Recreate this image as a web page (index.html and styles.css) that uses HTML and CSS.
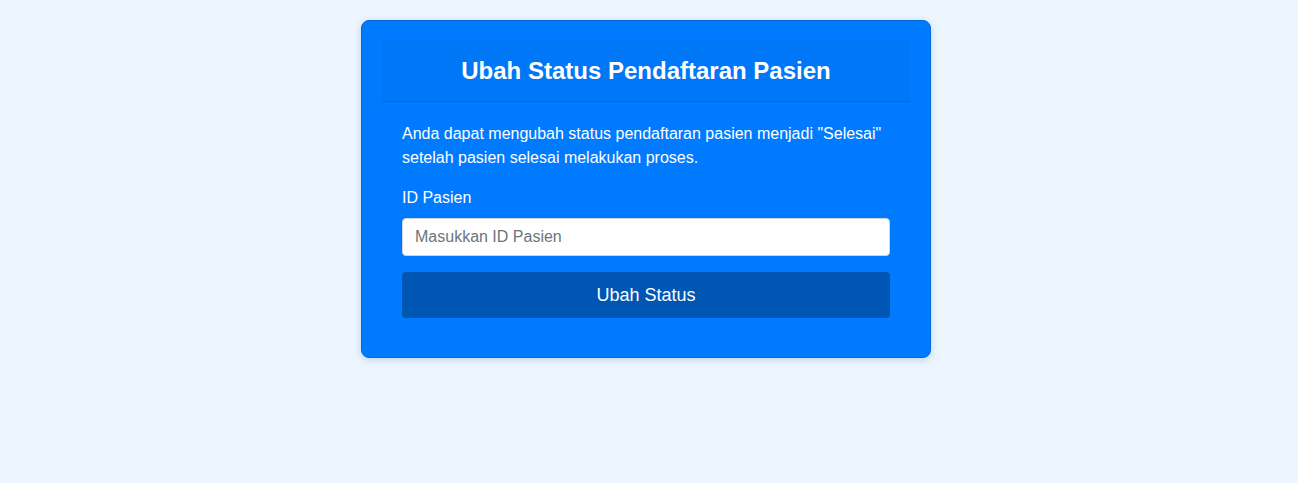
FILE: index.html
```html
<!DOCTYPE html>
<html lang="id">
<head>
<meta charset="utf-8">
<title>Ubah Status Pendaftaran Pasien</title>
<link rel="stylesheet" href="styles.css">
</head>
<body>
<div class="page">
  <div class="card">
    <div class="card-header">
      <h1 class="title">Ubah Status Pendaftaran Pasien</h1>
    </div>
    <div class="card-body">
      <p class="desc">Anda dapat mengubah status pendaftaran pasien menjadi "Selesai" setelah pasien selesai melakukan proses.</p>
      <form class="form">
        <label class="label" for="id">ID Pasien</label>
        <input class="input" id="id" type="text" placeholder="Masukkan ID Pasien">
        <button class="btn" type="button">Ubah Status</button>
      </form>
    </div>
  </div>
</div>
</body>
</html>
```

FILE: styles.css
```css
* { box-sizing: border-box; }
html, body {
  margin: 0;
  padding: 0;
  background: #edf6fe;
  font-family: "Liberation Sans", Arial, sans-serif;
}
.page {
  display: flex;
  justify-content: center;
  padding: 20px 6px 20px 0;
}
.card {
  width: 570px;
  background: #007bff;
  border: 1px solid #0069d9;
  border-radius: 8px;
  padding: 20px 20px 19px;
  box-shadow: 0 2px 8px rgba(0, 60, 120, 0.18);
  color: #fff;
}
.card-header {
  background: rgba(0, 0, 0, 0.03);
  border-bottom: 1px solid rgba(0, 0, 0, 0.1);
  padding: 12px 20px;
  text-align: center;
}
.title {
  margin: 0;
  font-size: 24px;
  line-height: 36px;
  font-weight: bold;
}
.card-body {
  padding: 20px;
}
.desc {
  margin: 0 0 16px;
  font-size: 16px;
  line-height: 24px;
}
.form {
  display: flex;
  flex-direction: column;
}
.label {
  font-size: 16px;
  line-height: 24px;
  margin-bottom: 8px;
}
.input {
  height: 38px;
  padding: 6px 12px;
  font-family: inherit;
  font-size: 16px;
  color: #495057;
  background: #fff;
  border: 1px solid #ced4da;
  border-radius: 4px;
  margin: 0 0 16px;
  outline: none;
}
.input::placeholder { color: #6c757d; }
.btn {
  height: 46px;
  padding: 0;
  font-family: inherit;
  font-size: 18px;
  color: #fff;
  background: #0056b3;
  border: none;
  border-radius: 4px;
  cursor: pointer;
}
```
